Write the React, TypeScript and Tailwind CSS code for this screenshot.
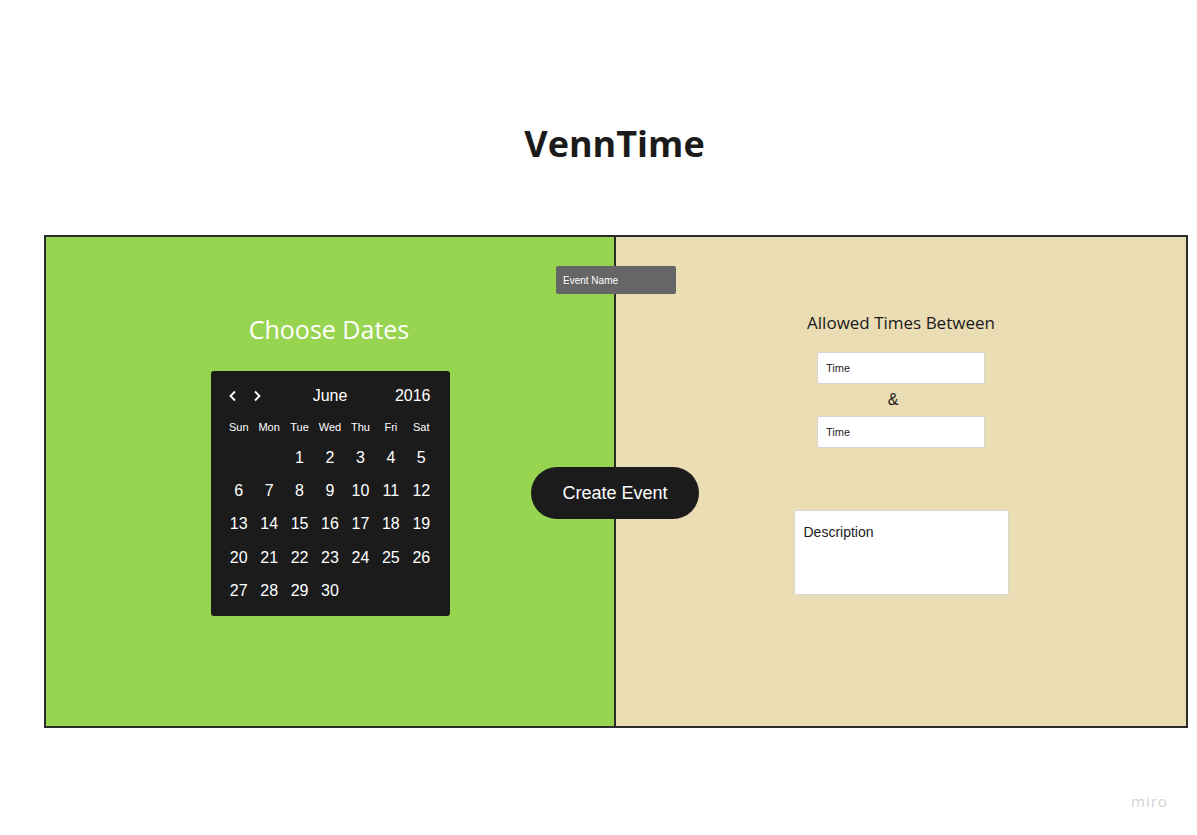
import React from "react";

const weekdays = ["Sun", "Mon", "Tue", "Wed", "Thu", "Fri", "Sat"];

export default function App() {
  const days: (number | null)[] = [null, null, ...Array.from({ length: 30 }, (_, i) => i + 1)];

  return (
    <div className="w-[1197px] h-[835px] bg-white relative font-['Liberation_Sans',Arial,sans-serif] overflow-hidden">
      <div className="pt-[120px] h-[235px]">
        <h1 className="text-center text-[36px] leading-[48px] font-bold text-[#1b1b1b] font-['Open_Sans',sans-serif] pl-[32px]">
          VennTime
        </h1>
      </div>

      <div className="relative ml-[44px] w-[1144px] h-[493px] border-2 border-[#2b2b2b] flex">
        {/* left: dates */}
        <div className="w-[570px] h-full bg-[#97d450] border-r-2 border-[#2b2b2b] flex flex-col items-center">
          <h2 className="mt-[75px] text-[25px] leading-[34px] text-white font-['Open_Sans',sans-serif] pr-[2px]">
            Choose Dates
          </h2>
          <div className="mt-[25px] w-[239px] h-[245px] bg-[#1b1b1b] rounded-[3px] px-[13px] pt-[13px] text-white">
            <div className="relative h-[24px] flex items-center text-[16px]">
              <svg className="absolute left-[4px]" width="10" height="12" viewBox="0 0 10 12" fill="none" stroke="white" strokeWidth="1.8">
                <path d="M7 1.5 L2.5 6 L7 10.5" />
              </svg>
              <svg className="absolute left-[28px]" width="10" height="12" viewBox="0 0 10 12" fill="none" stroke="white" strokeWidth="1.8">
                <path d="M3 1.5 L7.5 6 L3 10.5" />
              </svg>
              <span className="absolute left-0 right-0 text-center">June</span>
              <span className="absolute right-[6px]">2016</span>
            </div>
            <div className="mt-[9px] grid grid-cols-7 h-[20px] items-center text-[11px]">
              {weekdays.map((d) => (
                <span key={d} className="text-center">
                  {d}
                </span>
              ))}
            </div>
            <div className="mt-[4px] grid grid-cols-7 text-[16px]">
              {days.map((d, i) => (
                <span key={i} className="h-[33.3px] flex items-center justify-center">
                  {d ?? ""}
                </span>
              ))}
            </div>
          </div>
        </div>

        {/* right: times */}
        <div className="flex-1 h-full bg-[#eadcb3] flex flex-col items-center">
          <h2 className="mt-[74px] text-[17px] leading-[24px] text-[#1b1b1b] font-['Open_Sans',sans-serif]">
            Allowed Times Between
          </h2>
          <div className="mt-[17px] w-[168px] h-[32px] bg-white border border-[#d6d6d6] rounded-[2px] pl-[8px] flex items-center text-[11px] text-[#1b1b1b]">
            Time
          </div>
          <div className="h-[32px] flex items-center text-[16px] text-[#1b1b1b] mr-[16px]">&amp;</div>
          <div className="w-[168px] h-[32px] bg-white border border-[#d6d6d6] rounded-[2px] pl-[8px] flex items-center text-[11px] text-[#1b1b1b]">
            Time
          </div>
          <div className="mt-[62px] w-[215px] h-[85px] bg-white border border-[#d6d6d6] rounded-[2px] pl-[9px] pt-[11px] text-[14px] text-[#1b1b1b]">
            Description
          </div>
        </div>

        {/* overlays on the divider */}
        <div className="absolute left-[510px] top-[29px] w-[120px] h-[28px] bg-[#666666] rounded-[2px] pl-[7px] flex items-center text-[10px] text-white">
          Event Name
        </div>
        <button className="absolute left-[485px] top-[230px] w-[168px] h-[52px] rounded-full bg-[#1b1b1b] text-white text-[18px]">
          Create Event
        </button>
      </div>

      <div className="absolute left-[1131px] top-[790px] text-[15px] tracking-[1px] text-[#d3d3d8] font-['Open_Sans',sans-serif]">
        miro
      </div>
    </div>
  );
}
